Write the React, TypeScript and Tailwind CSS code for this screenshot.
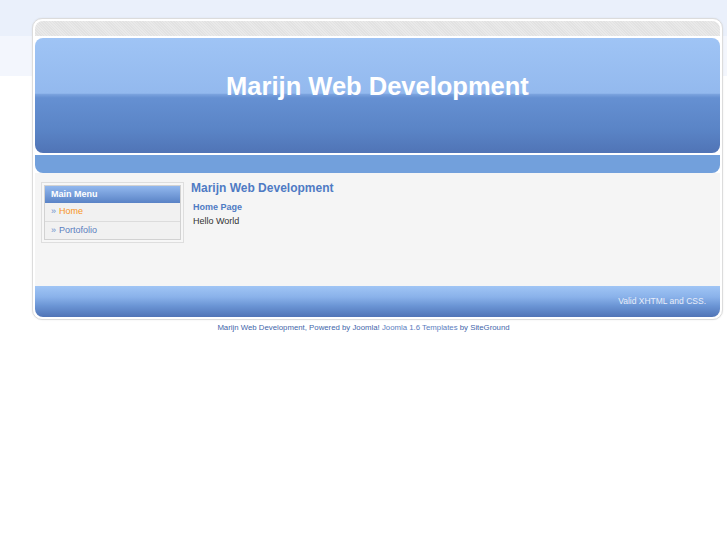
import React from "react";

const menu = [
  { label: "Home", active: true },
  { label: "Portofolio", active: false },
];

export default function App() {
  return (
    <div className="min-h-[545px] bg-[linear-gradient(to_bottom,#eaf0fb_0px,#eaf0fb_36px,#f3f6fd_36px,#f3f6fd_76px,#ffffff_76px)] pt-[18px] font-['Liberation_Sans',Arial,sans-serif]">
      <div className="ml-[32px] w-[691px] rounded-[10px] border border-[#dcdcdc] bg-white p-[2px] shadow-[0_0_2px_rgba(0,0,0,0.08)]">
        {/* top strip */}
        <div className="h-[15px] rounded-t-[8px] bg-[repeating-linear-gradient(45deg,#e2e2e2_0px,#e2e2e2_1px,#e9e9e9_1px,#e9e9e9_2px)]" />
        <div className="h-[2px]" />
        {/* header */}
        <div className="flex h-[115px] justify-center rounded-[8px] bg-[linear-gradient(to_bottom,#9fc4f5_0%,#93b9ee_48%,#7aa2de_49%,#6590d2_52%,#5a84c6_80%,#5074b6_100%)] pt-[33px]">
          <h1 className="text-[25.5px] leading-[30px] font-bold text-white">Marijn Web Development</h1>
        </div>
        <div className="h-[2px]" />
        <div className="h-[18px] rounded-b-[8px] bg-[#72a0dc]" />
        {/* content */}
        <div className="flex h-[113px] gap-[7px] bg-[#f5f5f5] pl-[6px] pt-[9px]">
          <div className="h-[61px] w-[143px] border border-[#dedede] bg-[#f7f7f7] p-[2px]">
            <div className="border border-[#d2d2d2] bg-[#f1f1f1]">
              <div className="flex h-[17px] items-center bg-[linear-gradient(to_bottom,#92b8ee,#5a83c6)] pl-[6px] text-[9px] font-bold text-white">
                Main Menu
              </div>
              {menu.map((m, i) => (
                <div
                  key={m.label}
                  className={`flex h-[18px] items-center pl-[6px] text-[9px] ${i > 0 ? "border-t border-[#dcdcdc]" : ""}`}
                >
                  <span className="text-[#6a8fcc]">»</span>
                  <span className={`ml-[3px] ${m.active ? "text-[#f7941d]" : "text-[#5b7ec0]"}`}>{m.label}</span>
                </div>
              ))}
            </div>
          </div>
          <div className="pt-[0px]">
            <h2 className="text-[12px] leading-[13px] font-bold text-[#4f7bc4]">Marijn Web Development</h2>
            <div className="mt-[6px] pl-[2px] text-[9px] leading-[12px] font-bold text-[#4f7bc4]">Home Page</div>
            <div className="mt-[2px] pl-[2px] text-[9px] leading-[12px] text-[#333]">Hello World</div>
          </div>
        </div>
        {/* footer */}
        <div className="flex h-[31px] items-center justify-end rounded-b-[8px] bg-[linear-gradient(to_bottom,#a0c5f5_0%,#8ab2ea_35%,#6a94d4_65%,#5074b6_100%)] pr-[14px] text-[8.5px] text-[#e8eefa]">
          Valid XHTML and CSS.
        </div>
      </div>
      <div className="mt-[2px] w-full text-center text-[7.8px] text-[#3f66aa]">
        Marijn Web Development, Powered by Joomla! <span className="text-[#5b7ec0]">Joomla 1.6 Templates</span> by SiteGround
      </div>
    </div>
  );
}
